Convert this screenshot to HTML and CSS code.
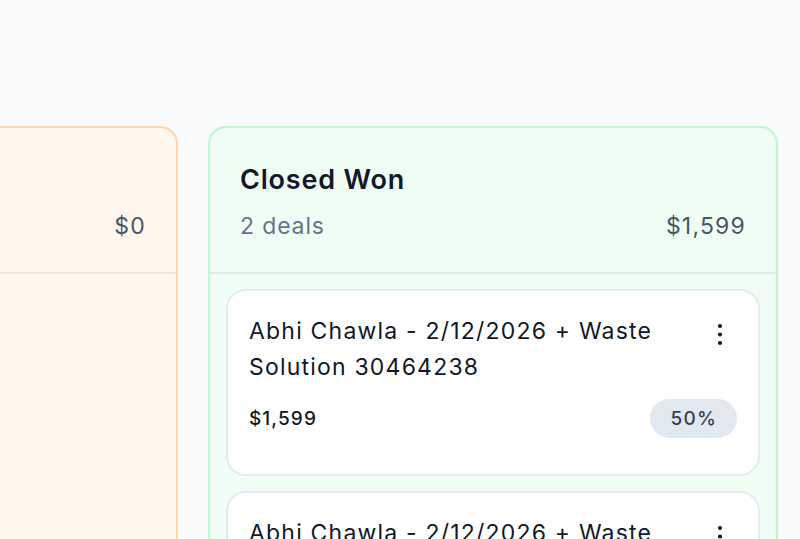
FILE: index.html
```html
<!DOCTYPE html>
<html lang="en">
<head>
<meta charset="utf-8">
<title>Pipeline</title>
<link rel="stylesheet" href="styles.css">
</head>
<body>
<main class="board">
  <section class="column column--orange">
    <header class="col-head">
      <h2 class="col-title">Negotiation</h2>
      <div class="col-meta"><span>0 deals</span><span class="col-amount">$0</span></div>
    </header>
    <div class="cards"></div>
  </section>
  <section class="column column--green">
    <header class="col-head">
      <h2 class="col-title">Closed Won</h2>
      <div class="col-meta"><span>2 deals</span><span class="col-amount">$1,599</span></div>
    </header>
    <div class="cards">
      <article class="card">
        <div class="card-top">
          <p class="card-title">Abhi Chawla - 2/12/2026 + Waste Solution 30464238</p>
          <button class="kebab" aria-label="More">
            <svg width="6" height="23" viewBox="0 0 6 23"><circle cx="3" cy="3" r="2.1"/><circle cx="3" cy="11.5" r="2.1"/><circle cx="3" cy="20" r="2.1"/></svg>
          </button>
        </div>
        <div class="card-foot">
          <span class="card-price">$1,599</span>
          <span class="badge">50%</span>
        </div>
      </article>
      <article class="card">
        <div class="card-top">
          <p class="card-title">Abhi Chawla - 2/12/2026 + Waste Solution 30464238</p>
          <button class="kebab" aria-label="More">
            <svg width="6" height="23" viewBox="0 0 6 23"><circle cx="3" cy="3" r="2.1"/><circle cx="3" cy="11.5" r="2.1"/><circle cx="3" cy="20" r="2.1"/></svg>
          </button>
        </div>
        <div class="card-foot">
          <span class="card-price">$1,599</span>
          <span class="badge">50%</span>
        </div>
      </article>
    </div>
  </section>
</main>
</body>
</html>
```

FILE: styles.css
```css
* { box-sizing: border-box; }
html, body {
  margin: 0;
  height: 539px;
  overflow: hidden;
  background: #f8fafc;
  font-family: Inter, "Noto Sans", sans-serif;
  color: #0f172a;
}
.board {
  display: flex;
  justify-content: flex-end;
  gap: 30px;
  padding: 126px 22px 0 0;
  width: 800px;
}
.column {
  flex: 0 0 570px;
  height: 700px;
  border: 2px solid;
  border-radius: 18px;
  overflow: hidden;
}
.column--orange { background: #fff7ed; border-color: #fed7aa; }
.column--green { background: #f0fdf4; border-color: #bbf7d0; }
.col-head {
  padding: 34px 31px 28px 30px;
  border-bottom: 2px solid #e2e8f0;
}
.column--green .col-head { border-bottom-color: #e0ebe7; }
.column--orange .col-head { border-bottom-color: #eee9e4; }
.col-title {
  margin: 0;
  font-size: 27px;
  line-height: 36px;
  font-weight: 600;
  letter-spacing: 0.8px;
  color: #111827;
}
.column--orange .col-title { visibility: hidden; }
.column--orange .col-meta span:first-child { visibility: hidden; }
.col-meta {
  display: flex;
  justify-content: space-between;
  margin-top: 10px;
  font-size: 23px;
  line-height: 36px;
  letter-spacing: 0.85px;
  color: #64748b;
}
.col-amount { color: #475569; letter-spacing: 1.2px; margin-right: -1px; }
.cards {
  display: flex;
  flex-direction: column;
  gap: 15px;
  padding: 15px 16px 16px;
}
.card {
  background: #fff;
  border: 2px solid #e5eaf0;
  border-radius: 20px;
  padding: 22px 21px 36px 21px;
}
.card-top {
  display: flex;
  align-items: flex-start;
  gap: 20px;
}
.card-title {
  margin: 0;
  flex: 1;
  font-size: 23px;
  line-height: 36px;
  letter-spacing: 1.2px;
  color: #111827;
}
.kebab {
  flex: none;
  width: 28px;
  height: 36px;
  margin: 3px 3px 0 0;
  padding: 0;
  border: 0;
  background: none;
  display: flex;
  align-items: center;
  justify-content: center;
  fill: #111827;
}
.card-foot {
  display: flex;
  justify-content: space-between;
  align-items: center;
  margin-top: 14px;
}
.card-price {
  font-size: 19px;
  font-weight: 500;
  letter-spacing: 1.1px;
  color: #111827;
}
.badge {
  background: #e2e8f0;
  border-radius: 999px;
  padding: 0 20px 0 21px;
  height: 39px;
  line-height: 39px;
  font-size: 19px;
  font-weight: 500;
  letter-spacing: 1.2px;
  color: #334155;
}
```
